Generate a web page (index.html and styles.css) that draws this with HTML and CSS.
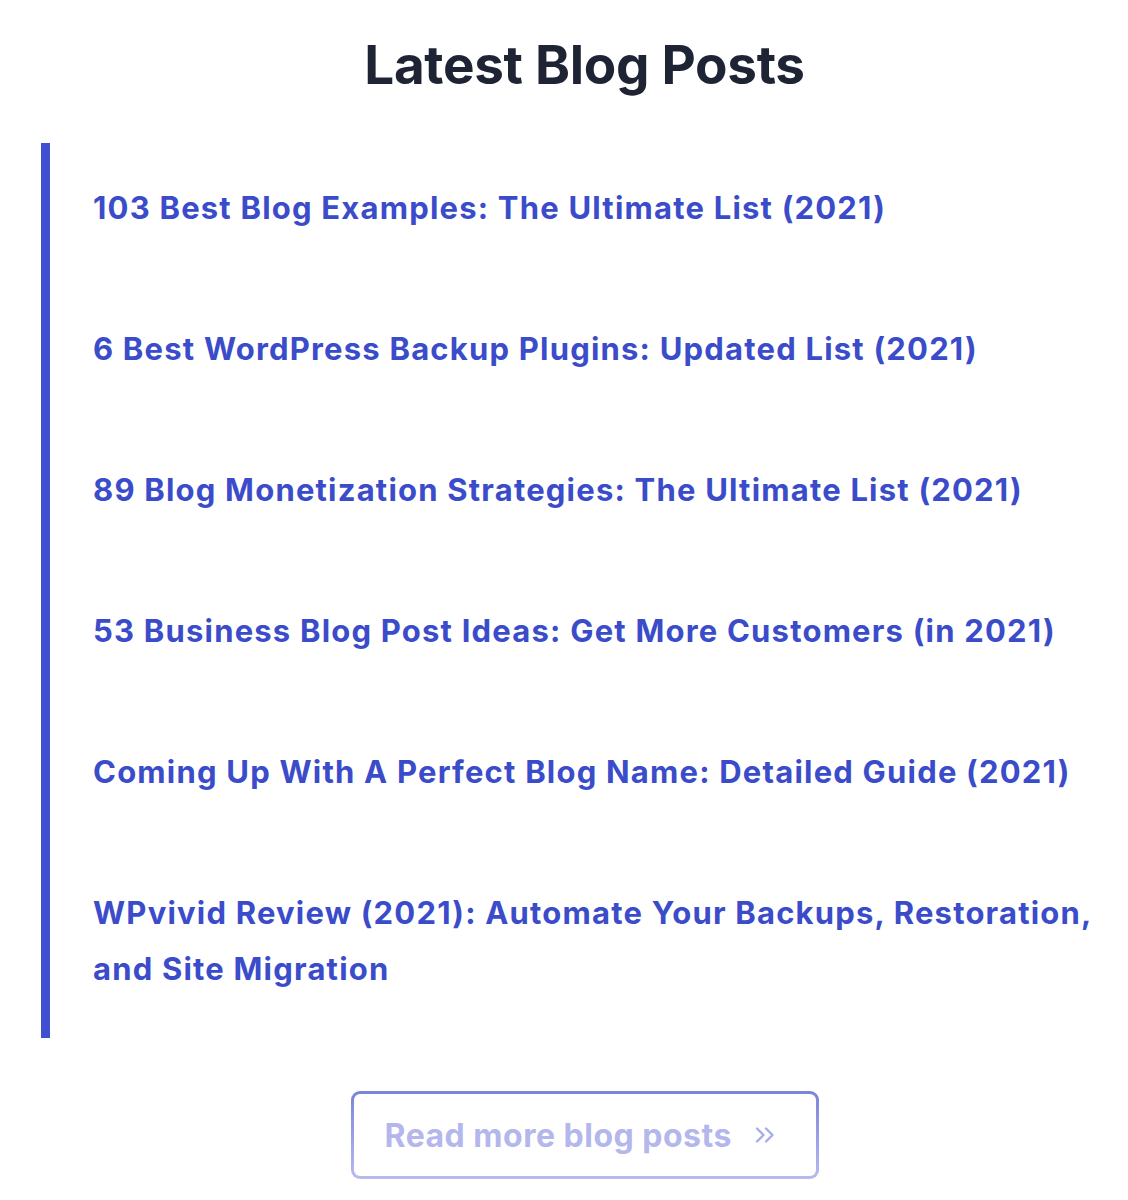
FILE: index.html
```html
<!DOCTYPE html>
<html lang="en">
<head>
    <meta charset="UTF-8">
    <meta name="viewport" content="width=device-width, initial-scale=1.0">
    <title>Latest Blog Posts</title>
    <link rel="stylesheet" href="styles.css">
</head>
<body>
    <section class="latest-posts">
        <h2 class="section-title">Latest Blog Posts</h2>

        <ul class="post-list">
            <li><a href="#">103 Best Blog Examples: The Ultimate List (2021)</a></li>
            <li><a href="#">6 Best WordPress Backup Plugins: Updated List (2021)</a></li>
            <li><a href="#">89 Blog Monetization Strategies: The Ultimate List (2021)</a></li>
            <li><a href="#">53 Business Blog Post Ideas: Get More Customers (in 2021)</a></li>
            <li><a href="#">Coming Up With A Perfect Blog Name: Detailed Guide (2021)</a></li>
            <li><a href="#">WPvivid Review (2021): Automate Your Backups, Restoration, and Site Migration</a></li>
        </ul>

        <div class="more">
            <a href="#" class="more-btn">
                <span>Read more blog posts</span>
                <svg class="chevrons" width="22" height="18" viewBox="0 0 22 18" fill="none" stroke="currentColor" stroke-width="2.4" stroke-linecap="round" stroke-linejoin="round">
                    <path d="M3 2.5l6.5 6.5-6.5 6.5"/>
                    <path d="M12 2.5l6.5 6.5-6.5 6.5"/>
                </svg>
            </a>
        </div>
    </section>
</body>
</html>
```

FILE: styles.css
```css
* {
    margin: 0;
    padding: 0;
    box-sizing: border-box;
}

body {
    font-family: Inter, 'Noto Sans', Arial, sans-serif;
    background: #fff;
    color: #1e2433;
    overflow: hidden;
}

.latest-posts {
    margin-left: 41px;
    padding-top: 32px;
}

.section-title {
    text-align: center;
    font-size: 53px;
    font-weight: 700;
    line-height: 66px;
    letter-spacing: -0.3px;
    color: #1e2433;
    margin-bottom: 45px;
}

.post-list {
    list-style: none;
    border-left: 9px solid #3f4fd1;
    padding: 37px 28px 41px 43px;
    display: flex;
    flex-direction: column;
    gap: 85px;
}

.post-list a {
    color: #3b4cca;
    text-decoration: none;
    font-size: 31px;
    font-weight: 700;
    line-height: 56px;
    letter-spacing: 1.2px;
}

.more {
    display: flex;
    justify-content: center;
    margin-top: 53px;
}

.more-btn {
    display: flex;
    align-items: center;
    gap: 22px;
    width: 468px;
    height: 88px;
    padding-left: 31px;
    border: 3px solid transparent;
    border-radius: 9px;
    background:
        linear-gradient(#fff, #fff) padding-box,
        linear-gradient(#7a83dd, #b7bbee) border-box;
    color: #b3b7ec;
    text-decoration: none;
    font-size: 32px;
    font-weight: 700;
    letter-spacing: 0.5px;
}

.chevrons {
    color: #a7acea;
}
```
